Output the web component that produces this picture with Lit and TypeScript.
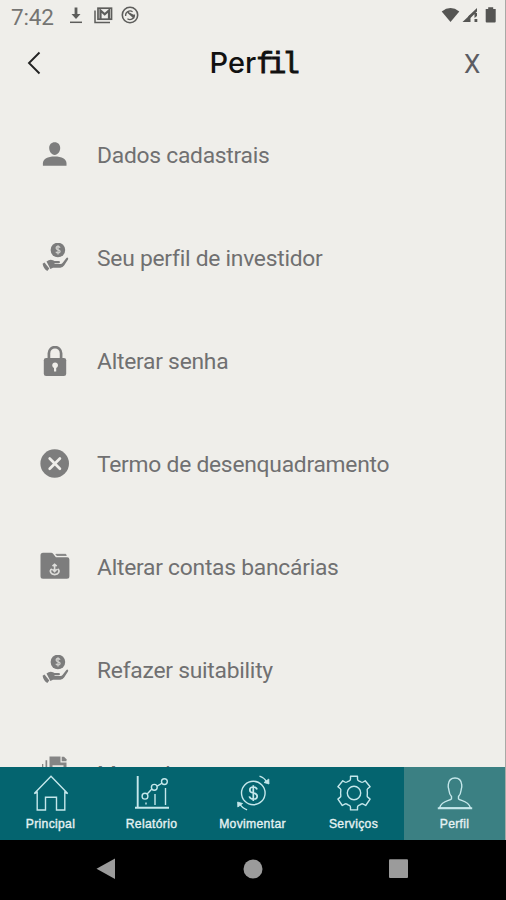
import { LitElement, html, css, svg } from "lit";
import { customElement, property } from "lit/decorators.js";

const coinHand = svg`<svg viewBox="0 0 30 30" width="30" height="30">
  <circle cx="17.900" cy="7" r="7.300" fill="#7c7c7c"/>
  <path d="M20 4.800q-.5-1.300-2-1.300-1.900 0-1.900 1.600 0 1.300 2 1.700 2 .4 2 1.800 0 1.500-2 1.500-1.700 0-2.200-1.400M18 2.200v9.200" fill="none" stroke="#d0d0cd" stroke-width="1.300"/>
  <path d="M6.500 18.500q3.300-2.800 6.500-1.300l1.500.7h4q1.500 0 1.500 1.100 0 1.200-1.500 1.200h-4v.8h6q1.300 0 2.200-1.200l3.500-4.600q.8-.9 1.600-.4.800.6.200 1.600l-3.900 6.200q-1.400 2.100-3.700 2.100H13l-2.600 1.300z" fill="#7c7c7c"/>
  <path d="m2.600 20.800 1.900-1.300 4.800 6-2 2.400q-3.900-2-4.700-7.100z" fill="#7c7c7c"/></svg>`;

const icons = {
  person: svg`<svg viewBox="0 0 30 30" width="30" height="30" fill="#7d7d7d">
    <path d="M14.700 2.200c3.300 0 5.500 2.300 5.500 5.900 0 3.700-2.300 6.800-5.500 6.800s-5.500-3.100-5.500-6.800c0-3.600 2.200-5.900 5.500-5.900z"/>
    <path d="M2.900 25.800v-2.400c0-4.200 4.700-6.800 11.800-6.800s11.800 2.600 11.800 6.800v2.400z"/></svg>`,
  coin: coinHand,
  lock: svg`<svg viewBox="0 0 30 30" width="30" height="30">
    <path d="M8.900 13V7.200a6.100 6.100 0 0 1 12.200 0V13" fill="none" stroke="#7d7d7d" stroke-width="2.700"/>
    <rect x="3.800" y="12" width="22.400" height="18" rx="2.300" fill="#7d7d7d"/>
    <path d="M14 25.500v-3.500a2.900 2.900 0 1 1 2.200 0v3.500z" fill="#efeeea"/></svg>`,
  close: svg`<svg viewBox="0 0 30 30" width="30" height="30">
    <circle cx="14.700" cy="14.500" r="14.300" fill="#7d7d7d"/>
    <path d="m9.700 9.500 10.200 10.200M19.900 9.500 9.700 19.700" stroke="#efeeea" stroke-width="2.700" stroke-linecap="round"/></svg>`,
  folder: svg`<svg viewBox="0 0 30 30" width="30" height="30">
    <path d="M3 .8h8.300q1 0 1.600.8l3 3.700h11.300q2.200 0 2.200 2.200v16.700q0 2.500-2.500 2.500H3q-2.500 0-2.500-2.500V3.300q0-2.500 2.500-2.500z" fill="#7d7d7d"/>
    <path d="M15.800 2.300h9.500q1 0 1 1.200h-9.500z" fill="#7d7d7d" stroke="#7d7d7d" stroke-width=".7"/>
    <path d="M14.600 19.500v-7.500m-2.200 5.200 2.200 2.300 2.200-2.300M11.800 16.800q-2.300 1.700-1 3.900.9 1.900 3.900 1.900t3.900-1.900q1.300-2.200-1-3.900M12.500 14.200l2.100-1.900 2.100 1.900" fill="none" stroke="#dededb" stroke-width="1.600"/></svg>`,
  docs: svg`<svg viewBox="0 0 30 30" width="30" height="30" fill="#858585" overflow="visible">
    <path d="M9.500-1.500h11v6h6v18h-17z"/><path d="M21.700-1.300h2.300l2.500 2.500v2.100h-4.800z"/>
    <path d="M5.500 2.200h1.700V26H5.500zM2 6h1.300v21H2z"/><path d="M12.500 7.300h11v1.600h-11z" fill="#efeeea"/></svg>`,
} as const;

const tabIcons = {
  home: svg`<svg viewBox="0 0 36 36" width="36" height="36"><path d="M4.200 17.300 1.300 18.500 18 1.200 34.700 18.500l-2.900-1.200V35H23.500V22.300h-11V35H4.200z"/></svg>`,
  chart: svg`<svg viewBox="0 0 36 36" width="36" height="36"><path d="M3.700 1v32.800M1 32.800h34" stroke-width="1.900"/><path d="M12 27.500v2M21 19v11M31.500 13v17M12.900 19.200l5.200-5.500M23.200 11.200l5-3.200"/><circle cx="11" cy="21.200" r="2.900"/><circle cx="20.300" cy="12.300" r="2.900"/><circle cx="30.400" cy="6.600" r="2.900"/></svg>`,
  money: svg`<svg viewBox="0 0 36 36" width="36" height="36"><circle cx="18.300" cy="18" r="11.800"/><path d="M22 14.500q-.6-2.500-3.700-2.500-3.500 0-3.500 2.900 0 2.400 3.500 3.100 3.900.7 3.900 3.300 0 2.900-3.900 2.900-3.300 0-4-2.800M18.300 10.200v15.700" stroke-width="1.700"/><path d="M24.500 1.200q5 1.500 7.300 6M12.100 34.800q-5-1.500-7.300-6"/><path d="m33.800 4 .2 5-5-1.500zM2.800 32l-.2-5 5 1.500z" fill="#c5e7eb" stroke-width=".8"/></svg>`,
  gear: svg`<svg viewBox="0 0 36 36" width="36" height="36"><path d="M14.500 1.300h7v2.600q0 1.300 1.200 1.900 1.200.5 2.300 1.200 1 .7 2.200 0l2-1.200 4.900 5.900-2.200 1.800q-1 .8-.7 2 .4 2.500 0 5-.2 1.200.8 1.900l2.100 1.700-4.400 6.400-2.400-1.400q-1.200-.7-2.200 0-1.100.8-2.400 1.300-1.200.5-1.200 1.800v2.700h-7v-2.700q0-1.300-1.200-1.800-1.300-.5-2.400-1.300-1-.7-2.200 0l-2.400 1.400-4.400-6.400L4 22.400q1-.7.800-1.900-.4-2.500 0-5 .3-1.200-.7-2l-2.200-1.800 4.900-5.900 2 1.200q1.200.7 2.200 0 1.100-.7 2.300-1.200 1.200-.6 1.200-1.900z" stroke-linejoin="round"/><circle cx="18" cy="18" r="6.700"/></svg>`,
  user: svg`<svg viewBox="0 0 36 36" width="36" height="36"><path d="M14.500 21.500c-2.300-2.300-2.400-4.400-2.700-7C11.200 13 11 11.500 11.300 9.500 11.800 5.300 14.300 3 18 3s6.200 2.300 6.700 6.500c.3 2 .1 3.500-.5 5-.3 2.600-.4 4.700-2.700 7v2.400c1.400 2.100 9.800 1.300 12 9.100h-31c2.200-7.800 10.600-7 12-9.100z"/><path d="M.8 33.200h34.400" stroke-width="1.900"/></svg>`,
} as const;

@customElement("menu-row")
class MenuRow extends LitElement {
  @property() icon: keyof typeof icons = "person";
  @property() label = "";
  static styles = css`
    :host { display: flex; align-items: center; height: 102.900px; flex: none; padding-left: 40px; gap: 27px; color: #707071; font: 22.800px Roboto, sans-serif; }
    svg { display: block; }
    .label { white-space: nowrap; letter-spacing: -.24px; padding-top: 1px; }
    :host([icon="docs"]) .label { padding-top: 4px; }
  `;
  render() {
    return html`${icons[this.icon]}<span class="label">${this.label}</span>`;
  }
}

@customElement("tab-item")
class TabItem extends LitElement {
  @property() icon: keyof typeof tabIcons = "home";
  @property() label = "";
  static styles = css`
    :host { flex: 1; display: flex; flex-direction: column; align-items: center; padding-top: 8px; color: #e6f2f3; font: 12.200px "Liberation Sans", sans-serif; }
    :host([active]) { background: #3b8083; }
    svg { display: block; fill: none; stroke: #c5e7eb; stroke-width: 1.400; }
    .label { margin-top: 6px; line-height: 14px; letter-spacing: .3px; -webkit-text-stroke: .35px #e6f2f3; white-space: nowrap; }
  `;
  render() {
    return html`${tabIcons[this.icon]}<span class="label">${this.label}</span>`;
  }
}

@customElement("app-root")
class AppRoot extends LitElement {
  static styles = css`
    :host { display: flex; flex-direction: column; width: 506px; height: 900px; background: #efeeea; overflow: hidden; font-family: Roboto, sans-serif; }
    .screen { height: 840px; flex: none; display: flex; flex-direction: column; box-sizing: border-box; border-right: 1px solid #a9a9a6; }
    .status { height: 32px; flex: none; display: flex; align-items: center; padding: 0 8px 0 11px; color: #757573; }
    .time { font-size: 22.500px; width: 56px; line-height: 32px; letter-spacing: -.2px; padding-top: 1px; }
    .status svg { display: block; flex: none; }
    .spacer { flex: 1; }
    .header { height: 62px; flex: none; display: grid; grid-template-columns: 70px 1fr 70px; align-items: center; }
    .back { margin-left: 26px; }
    .title { justify-self: center; display: flex; align-items: baseline; color: #111; font: 500 29px Inter, sans-serif; line-height: 62px; padding-left: 4px; }
    .slab { font: 29px "Liberation Mono", monospace; -webkit-text-stroke: .9px #111; letter-spacing: -4.900px; }
    .last { letter-spacing: 0; margin-left: 1px; }
    .x { color: #5c5c62; font-size: 26px; margin-left: 29px; padding-top: 2px; }
    .list { flex: 1; min-height: 0; overflow: hidden; display: flex; flex-direction: column; padding-top: 10px; }
    .tabs { height: 73px; flex: none; display: flex; background: #04646f; }
    .system { flex: 1; background: #000; display: flex; justify-content: center; }
    .system svg { display: block; }
  `;
  render() {
    return html`
      <div class="screen">
        <div class="status">
          <span class="time">7:42</span>
          <svg viewBox="0 0 72 22" width="72" height="22" fill="none" stroke="#5d5d5b">
            <path d="M9 2.500v8" stroke-width="2.800"/><path d="M4.500 9h9L9 14z" fill="#5d5d5b" stroke="none"/><path d="M3 17.300h12" stroke-width="1.500"/>
            <path d="M28 5.500v12h15" stroke-width="1.500"/><rect x="31" y="3.200" width="13.500" height="11" stroke-width="1.700"/><path d="M33.500 14V5.500l4.200 3.800L42 5.500V14" stroke-width="2.200"/>
            <circle cx="63" cy="10" r="7.700" stroke-width="1.600"/><path d="M58.600 11a4.500 4.500 0 0 1 7-4.200M67.400 9.500a4.500 4.500 0 0 1-7 4.200" stroke-width="1.300"/><path d="m61 7.500 5.500 3v2z" fill="#5d5d5b" stroke-width="1.300"/>
          </svg>
          <span class="spacer"></span>
          <svg viewBox="0 0 56 22" width="56" height="22" fill="#555553">
            <path d="M.700 6.500q8.800-6.800 17.600 0L9.500 17z"/>
            <path d="m21.500 17 8-7.500V17z"/><path d="m27 11.500 9-8.500v3.500L29.500 13zM33.500 14h2.800v3h-2.800zM33.500 8h2.500v3l-2.500 2z"/>
            <path d="M44.700 4h2.500V2.300h5V4h2.500v12.500q0 1-1 1h-8q-1 0-1-1z"/>
          </svg>
        </div>
        <div class="header">
          <svg class="back" viewBox="0 0 16 24" width="16" height="24"><path d="M13.500 1.500 3 12l10.500 10.500" fill="none" stroke="#222" stroke-width="1.900"/></svg>
          <div class="title"><span>Per</span><span class="slab">fi<span class="last">l</span></span></div>
          <span class="x">X</span>
        </div>
        <div class="list">
          <menu-row icon="person" label="Dados cadastrais"></menu-row>
          <menu-row icon="coin" label="Seu perfil de investidor"></menu-row>
          <menu-row icon="lock" label="Alterar senha"></menu-row>
          <menu-row icon="close" label="Termo de desenquadramento"></menu-row>
          <menu-row icon="folder" label="Alterar contas bancárias"></menu-row>
          <menu-row icon="coin" label="Refazer suitability"></menu-row>
          <menu-row icon="docs" label="Meus documentos"></menu-row>
        </div>
        <div class="tabs">
          <tab-item icon="home" label="Principal"></tab-item>
          <tab-item icon="chart" label="Relatório"></tab-item>
          <tab-item icon="money" label="Movimentar"></tab-item>
          <tab-item icon="gear" label="Serviços"></tab-item>
          <tab-item icon="user" label="Perfil" active></tab-item>
        </div>
      </div>
      <div class="system">
        <svg viewBox="0 0 506 60" width="506" height="60" fill="#9b9b9b">
          <path d="M96.500 28.800 115 18.500v20.600z"/><circle cx="253" cy="29" r="9.500"/><rect x="389" y="19.300" width="19" height="18.800" rx="1"/>
        </svg>
      </div>`;
  }
}
